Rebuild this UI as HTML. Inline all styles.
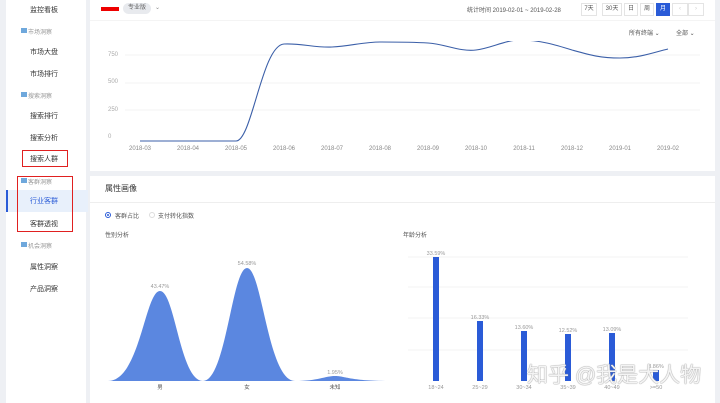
<!DOCTYPE html>
<html><head><meta charset="utf-8"><style>
*{margin:0;padding:0;box-sizing:border-box}
body{width:720px;height:403px;overflow:hidden;background:#eef0f4;font-family:"Liberation Sans","Noto Sans CJK SC",sans-serif;position:relative;color:#333}
.a{position:absolute;white-space:nowrap}
.side{position:absolute;left:6px;top:0;width:80px;height:403px;background:#fff}
.it{position:absolute;left:24px;font-size:7px;color:#333}
.hd{position:absolute;left:22px;font-size:6px;color:#999}
.hd:before{content:"";position:absolute;left:-7px;top:1px;width:6px;height:5px;background:#6fa8dc}
.card{position:absolute;background:#fff}
.t{font-size:6px;color:#888}
.btn{position:absolute;top:3px;height:13px;border:1px solid #e4e4e4;font-size:6px;color:#555;text-align:center;line-height:11px}
</style></head><body>
<div class="side">
<div class="it" style="top:5px">监控看板</div>
<div class="hd" style="top:27px">市场洞察</div>
<div class="it" style="top:47px">市场大盘</div>
<div class="it" style="top:69px">市场排行</div>
<div class="hd" style="top:91px">搜索洞察</div>
<div class="it" style="top:111px">搜索排行</div>
<div class="it" style="top:133px">搜索分析</div>
<div class="it" style="top:154px">搜索人群</div>
<div class="hd" style="top:177px">客群洞察</div>
<div style="position:absolute;left:0;top:190px;width:82px;height:22px;background:#e8f0fb;border-left:2px solid #2a5bd7"></div>
<div class="it" style="top:196px;color:#2a5bd7">行业客群</div>
<div class="it" style="top:219px">客群透视</div>
<div class="hd" style="top:241px">机会洞察</div>
<div class="it" style="top:262px">属性洞察</div>
<div class="it" style="top:284px">产品洞察</div>
</div>
<div class="a" style="left:22px;top:150px;width:46px;height:17px;border:1px solid #e02020"></div>
<div class="a" style="left:17px;top:176px;width:56px;height:56px;border:1px solid #e02020"></div>

<div class="card" style="left:90px;top:0;width:625px;height:171px"></div>
<div class="a" style="left:101px;top:7px;width:18px;height:4px;background:#e00"></div>
<div class="a" style="left:123px;top:3px;width:28px;height:11px;border-radius:6px;background:#e8eaee;font-size:6px;color:#666;text-align:center;line-height:11px">专业版</div>
<div class="a t" style="left:155px;top:4px">⌄</div>
<div class="a t" style="left:467px;top:5px;color:#555">统计时间 2019-02-01 ~ 2019-02-28</div>
<div class="btn" style="left:581px;width:16px">7天</div>
<div class="btn" style="left:602px;width:20px">30天</div>
<div class="btn" style="left:624px;width:14px">日</div>
<div class="btn" style="left:640px;width:14px">周</div>
<div class="btn" style="left:656px;width:14px;background:#2a5bd7;border-color:#2a5bd7;color:#fff">月</div>
<div class="btn" style="left:672px;width:16px;color:#ccc">‹</div>
<div class="btn" style="left:688px;width:16px;color:#ccc">›</div>
<div class="a" style="left:90px;top:20px;width:625px;height:1px;background:#f4f4f4"></div>
<div class="a t" style="left:629px;top:28px;color:#555">所有终端 ⌄</div>
<div class="a t" style="left:676px;top:28px;color:#555">全部 ⌄</div>
<div class="a" style="left:90px;top:40px;width:625px;height:1px;background:#eee"></div>
<div class="a t" style="left:108px;top:52px;color:#aaa">750</div>
<div class="a t" style="left:108px;top:79px;color:#aaa">500</div>
<div class="a t" style="left:108px;top:107px;color:#aaa">250</div>
<div class="a t" style="left:108px;top:134px;color:#aaa">0</div>
<svg class="a" style="left:0;top:0" width="720" height="170">
<g stroke="#f3f3f3" stroke-width="1"><line x1="125" y1="55" x2="700" y2="55"/><line x1="125" y1="83" x2="700" y2="83"/><line x1="125" y1="110" x2="700" y2="110"/></g>
<path d="M140 141 L236 141 C252 141 262 45 284 44 C300 43 316 48 332 47 C350 46 364 42 380 42 C400 42 412 42 428 43 C445 44 460 52 476 50 C492 48 505 40 520 40 C540 40 556 45 572 50 C590 55 600 58 620 58 C640 58 655 52 668 49" fill="none" stroke="#3b5fa8" stroke-width="1.1"/>
<rect x="90" y="38" width="625" height="3" fill="#fff"/>
<g font-size="6" fill="#888" text-anchor="middle" font-family="Liberation Sans">
<text x="140" y="150">2018-03</text><text x="188" y="150">2018-04</text><text x="236" y="150">2018-05</text><text x="284" y="150">2018-06</text><text x="332" y="150">2018-07</text><text x="380" y="150">2018-08</text><text x="428" y="150">2018-09</text><text x="476" y="150">2018-10</text><text x="524" y="150">2018-11</text><text x="572" y="150">2018-12</text><text x="620" y="150">2019-01</text><text x="668" y="150">2019-02</text></g>
</svg>

<div class="card" style="left:90px;top:176px;width:625px;height:227px"></div>
<div class="a" style="left:105px;top:183px;font-size:8px;color:#333">属性画像</div>
<div class="a" style="left:90px;top:202px;width:625px;height:1px;background:#eee"></div>
<div class="a" style="left:105px;top:212px;width:6px;height:6px;border:1px solid #2a5bd7;border-radius:50%"></div>
<div class="a" style="left:107px;top:214px;width:2px;height:2px;background:#2a5bd7;border-radius:50%"></div>
<div class="a t" style="left:115px;top:211px;color:#555">客群占比</div>
<div class="a" style="left:149px;top:212px;width:6px;height:6px;border:1px solid #ddd;border-radius:50%"></div>
<div class="a t" style="left:158px;top:211px;color:#555">支付转化指数</div>
<div class="a t" style="left:105px;top:230px;color:#555">性别分析</div>
<div class="a t" style="left:403px;top:230px;color:#555">年龄分析</div>
<svg class="a" style="left:0;top:0" width="720" height="403">
<path d="M108 381 C140 381 145 291 160 291 C175 291 180 381 203 381 C226 381 232 268 247 268 C262 268 268 381 295 381 C318 381 325 376 335 376 C345 376 350 381 390 381 Z" fill="#5b87e0"/>
<g stroke="#f3f3f3"><line x1="408" y1="257" x2="688" y2="257"/><line x1="408" y1="287" x2="688" y2="287"/><line x1="408" y1="318" x2="688" y2="318"/><line x1="408" y1="350" x2="688" y2="350"/></g>
<g fill="#2a5bd7"><rect x="433" y="257" width="6" height="124"/><rect x="477" y="321" width="6" height="60"/><rect x="521" y="331" width="6" height="50"/><rect x="565" y="334" width="6" height="47"/><rect x="609" y="333" width="6" height="48"/><rect x="653" y="370" width="6" height="11"/></g>
<g font-size="5.5" fill="#999" text-anchor="middle" font-family="Liberation Sans">
<text x="160" y="288">43.47%</text><text x="247" y="265">54.58%</text><text x="335" y="374">1.95%</text>
<text x="436" y="255">33.59%</text><text x="480" y="319">16.33%</text><text x="524" y="329">13.60%</text><text x="568" y="332">12.52%</text><text x="612" y="331">13.09%</text><text x="656" y="368">3.86%</text>
<text x="160" y="389" fill="#555">男</text><text x="247" y="389" fill="#555">女</text><text x="335" y="389" fill="#555">未知</text>
<text x="436" y="389">18~24</text><text x="480" y="389">25~29</text><text x="524" y="389">30~34</text><text x="568" y="389">35~39</text><text x="612" y="389">40~49</text><text x="656" y="389">&gt;=50</text></g>
</svg>
<div class="a" style="left:527px;top:359px;font-size:21px;color:rgba(255,255,255,0.9);text-shadow:0 0 1px #888,0 0 1px #999;font-family:'Liberation Sans','Noto Sans CJK SC',sans-serif">知乎 @我是大人物</div>
</body></html>
